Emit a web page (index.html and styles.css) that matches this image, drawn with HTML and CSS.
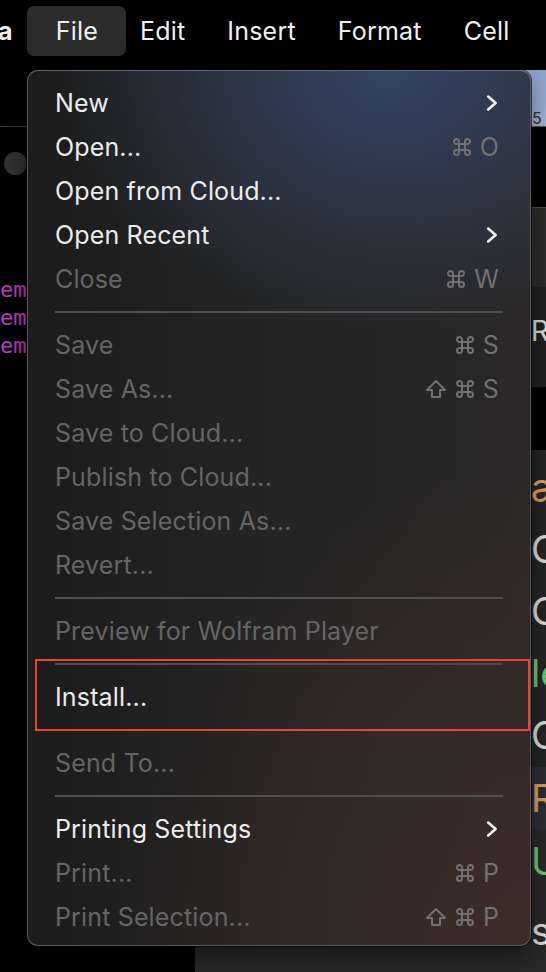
FILE: index.html
```html
<!DOCTYPE html>
<html lang="en">
<head>
<meta charset="utf-8">
<title>File menu</title>
<link rel="stylesheet" href="styles.css">
</head>
<body>
<div class="screen">
  <header class="menubar">
    <span class="app">a</span>
    <span class="mi active">File</span>
    <span class="mi">Edit</span>
    <span class="mi">Insert</span>
    <span class="mi">Format</span>
    <span class="mi">Cell</span>
  </header>
  <main class="workspace">
    <section class="left-pane">
      <div class="toolbar"></div>
      <div class="dot"></div>
      <div class="code">em<br>em<br>em</div>
    </section>
    <section class="right-pane">
      <div class="band b-blue"><span class="peek small">5</span></div>
      <div class="band b-black1"></div>
      <div class="band b-gray1"></div>
      <div class="band b-gray2"><span class="peek r">R</span></div>
      <div class="band b-black2"></div>
      <div class="band b-doc">
        <span class="peek big orange">a</span>
        <span class="peek big">C</span>
        <span class="peek big">C</span>
        <span class="peek big green">le</span>
        <span class="peek big">G</span>
      </div>
      <div class="band b-sel"><span class="peek big orange">R</span></div>
      <div class="band b-doc2">
        <span class="peek big green">U</span>
        <span class="peek big">s</span>
      </div>
    </section>

    <nav class="menu">
      <div class="row"><span class="label">New</span><svg class="chev" width="12" height="16" viewBox="0 0 12 16"><path d="M2.2 1.6 L9.6 8 L2.2 14.4" fill="none" stroke="#f2f2f2" stroke-width="2.6" stroke-linecap="round" stroke-linejoin="round"/></svg></div>
      <div class="row"><span class="label">Open...</span><span class="sc"><svg class="cmd" width="20" height="20" viewBox="0 0 20 20"><path d="M7 7 V4.5 A2.5 2.5 0 1 0 4.5 7 H15.5 A2.5 2.5 0 1 0 13 4.5 V15.5 A2.5 2.5 0 1 0 15.5 13 H4.5 A2.5 2.5 0 1 0 7 15.5 V7"/></svg><span class="key">O</span></span></div>
      <div class="row"><span class="label">Open from Cloud...</span></div>
      <div class="row"><span class="label">Open Recent</span><svg class="chev" width="12" height="16" viewBox="0 0 12 16"><path d="M2.2 1.6 L9.6 8 L2.2 14.4" fill="none" stroke="#f2f2f2" stroke-width="2.6" stroke-linecap="round" stroke-linejoin="round"/></svg></div>
      <div class="row off"><span class="label">Close</span><span class="sc"><svg class="cmd" width="20" height="20" viewBox="0 0 20 20"><path d="M7 7 V4.5 A2.5 2.5 0 1 0 4.5 7 H15.5 A2.5 2.5 0 1 0 13 4.5 V15.5 A2.5 2.5 0 1 0 15.5 13 H4.5 A2.5 2.5 0 1 0 7 15.5 V7"/></svg><span class="key">W</span></span></div>
      <div class="sep"></div>
      <div class="row off"><span class="label">Save</span><span class="sc"><svg class="cmd" width="20" height="20" viewBox="0 0 20 20"><path d="M7 7 V4.5 A2.5 2.5 0 1 0 4.5 7 H15.5 A2.5 2.5 0 1 0 13 4.5 V15.5 A2.5 2.5 0 1 0 15.5 13 H4.5 A2.5 2.5 0 1 0 7 15.5 V7"/></svg><span class="key">S</span></span></div>
      <div class="row off"><span class="label">Save As...</span><span class="sc"><svg class="shift" width="22" height="20" viewBox="0 0 22 20"><path d="M11 2 L20 11 H15 V18 H7 V11 H2 Z"/></svg><svg class="cmd" width="20" height="20" viewBox="0 0 20 20"><path d="M7 7 V4.5 A2.5 2.5 0 1 0 4.5 7 H15.5 A2.5 2.5 0 1 0 13 4.5 V15.5 A2.5 2.5 0 1 0 15.5 13 H4.5 A2.5 2.5 0 1 0 7 15.5 V7"/></svg><span class="key">S</span></span></div>
      <div class="row off"><span class="label">Save to Cloud...</span></div>
      <div class="row off"><span class="label">Publish to Cloud...</span></div>
      <div class="row off"><span class="label">Save Selection As...</span></div>
      <div class="row off"><span class="label">Revert...</span></div>
      <div class="sep"></div>
      <div class="row off"><span class="label">Preview for Wolfram Player</span></div>
      <div class="sep"></div>
      <div class="row"><span class="label">Install...</span></div>
      <div class="sep"></div>
      <div class="row off"><span class="label">Send To...</span></div>
      <div class="sep"></div>
      <div class="row"><span class="label">Printing Settings</span><svg class="chev" width="12" height="16" viewBox="0 0 12 16"><path d="M2.2 1.6 L9.6 8 L2.2 14.4" fill="none" stroke="#f2f2f2" stroke-width="2.6" stroke-linecap="round" stroke-linejoin="round"/></svg></div>
      <div class="row off"><span class="label">Print...</span><span class="sc"><svg class="cmd" width="20" height="20" viewBox="0 0 20 20"><path d="M7 7 V4.5 A2.5 2.5 0 1 0 4.5 7 H15.5 A2.5 2.5 0 1 0 13 4.5 V15.5 A2.5 2.5 0 1 0 15.5 13 H4.5 A2.5 2.5 0 1 0 7 15.5 V7"/></svg><span class="key">P</span></span></div>
      <div class="row off"><span class="label">Print Selection...</span><span class="sc"><svg class="shift" width="22" height="20" viewBox="0 0 22 20"><path d="M11 2 L20 11 H15 V18 H7 V11 H2 Z"/></svg><svg class="cmd" width="20" height="20" viewBox="0 0 20 20"><path d="M7 7 V4.5 A2.5 2.5 0 1 0 4.5 7 H15.5 A2.5 2.5 0 1 0 13 4.5 V15.5 A2.5 2.5 0 1 0 15.5 13 H4.5 A2.5 2.5 0 1 0 7 15.5 V7"/></svg><span class="key">P</span></span></div>
      <div class="highlight"></div>
    </nav>
  </main>
</div>
</body>
</html>
```

FILE: styles.css
```css
* { box-sizing: border-box; }
html, body { margin: 0; padding: 0; background: #000; }
body { width: 546px; height: 972px; overflow: hidden; font-family: Inter, "Noto Sans", sans-serif; }

.screen { display: flex; flex-direction: column; width: 546px; height: 972px; }

/* top menu bar */
.menubar {
  height: 70px;
  flex: none;
  display: flex;
  align-items: flex-start;
  gap: 42px;
  padding-top: 6px;
  background: #000;
  color: #f0f0f0;
  font-size: 25px;
  line-height: 50px;
  letter-spacing: 0.2px;
}
.app { font-weight: 700; margin-left: -2px; margin-right: 1px; }
.mi { height: 50px; }
.mi.active {
  padding: 0 28px 0 29px;
  margin: 0 -28px 0 -29px;
  background: #2c2c2c;
  border-radius: 7px;
}

/* window content behind the menu */
.workspace { position: relative; flex: 1; display: flex; }

.left-pane { width: 195px; flex: none; background: #000; display: flex; flex-direction: column; }
.toolbar { height: 57px; border-bottom: 1px solid #3c3c3c; }
.dot { width: 23px; height: 23px; border-radius: 50%; background: #333; margin: 25px 0 0 4px; }
.code {
  margin-top: 101px;
  font-family: "DejaVu Sans Mono", monospace;
  font-size: 22px;
  line-height: 28px;
  color: #c23ccb;
}

.right-pane { flex: 1; display: flex; flex-direction: column; background: #2a2a2a; }
.band { display: flex; flex-direction: column; align-items: flex-end; overflow: hidden; }
.peek { width: 15px; white-space: nowrap; overflow: hidden; color: #e2e2e2; }
.b-blue { height: 57px; background: linear-gradient(180deg, #8fa6d0, #a9bbdc); border-bottom: 1px solid #555; justify-content: flex-end; }
.peek.small { font-size: 16px; line-height: 16px; color: #333; padding-left: 1px; }
.b-black1 { height: 80px; background: #000; }
.b-gray1 { height: 80px; background: #2e2e2e; border-top: 1px solid #555; }
.b-gray2 { height: 100px; background: #222; padding-top: 27px; }
.peek.r { font-size: 28px; line-height: 34px; }
.b-black2 { height: 63px; background: #000; }
.b-doc { height: 317px; background: #262626; padding-top: 6px; }
.peek.big { font-size: 38px; line-height: 62px; }
.orange { color: #e6a35e !important; }
.green { color: #6fcf74 !important; }
.b-sel { height: 63px; background: #2c3038; }
.b-doc2 { flex: 1; background: #2a2a2a; }
.b-doc2 .peek:last-child { margin-top: 8px; }

/* the File menu */
.menu {
  position: absolute;
  top: 0;
  left: 27px;
  width: 504px;
  height: 876px;
  border: 1px solid #585858;
  border-top-color: #5e6878;
  border-radius: 11px;
  padding: 10px 0 6px;
  box-shadow: 0 0 0 1px rgba(0,0,0,0.6), 0 10px 30px rgba(0,0,0,0.5);
  background:
    radial-gradient(ellipse 330px 260px at 72% 0%, rgba(52,70,104,0.95), rgba(52,70,104,0) 100%),
    radial-gradient(ellipse 420px 480px at 100% 100%, rgba(66,44,40,0.85), rgba(66,44,40,0) 100%),
    linear-gradient(90deg, #1c1c1c 0%, #242424 45%, #2a2828 100%);
  font-size: 25px;
  letter-spacing: 0.15px;
  color: #ececec;
}
.row {
  height: 44px;
  display: flex;
  align-items: center;
  justify-content: space-between;
  padding: 0 31px 0 27px;
  white-space: nowrap;
}
.row.off { color: #656565; }
.sc { display: flex; align-items: center; gap: 8px; color: #717171; }
.sc svg { display: block; fill: none; stroke: #717171; stroke-width: 2; stroke-linejoin: round; }
.key { font-size: 25px; }
.chev { display: block; margin-right: 1px; }
.sep { height: 22px; display: flex; align-items: center; padding: 0 27px; }
.sep::before { content: ""; flex: 1; height: 2px; background: #4f4f4f; }

.highlight {
  position: absolute;
  left: 7px;
  top: 588px;
  width: 495px;
  height: 72px;
  border: 2px solid #e5472c;
}
```
